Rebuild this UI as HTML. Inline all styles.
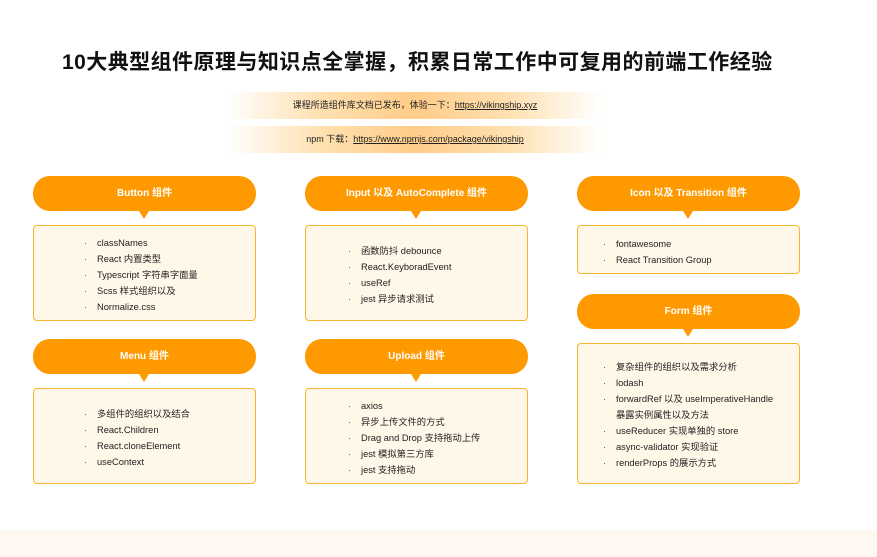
<!DOCTYPE html>
<html><head><meta charset="utf-8"><style>
*{margin:0;padding:0;box-sizing:border-box}
body{width:877px;height:557px;background:#fff;position:relative;overflow:hidden;font-family:"Liberation Sans","Noto Sans CJK SC",sans-serif;color:#222}
.title{position:absolute;left:62px;top:46px;font-size:21px;font-weight:bold;color:#111;white-space:nowrap;letter-spacing:0.45px}
.ban{position:absolute;left:228px;width:374px;height:27px;background:linear-gradient(90deg,rgba(255,200,120,0) 0%,#ffe0b0 25%,#ffcc88 50%,#ffe0b0 75%,rgba(255,200,120,0) 100%);font-size:9px;text-align:center;line-height:27px;color:#222}
.ban u{color:#222}
.hd{position:absolute;width:223px;height:35px;background:#ff9900;border-radius:17px;color:#fff;font-weight:bold;font-size:10px;text-align:center;line-height:35px}
.hd:after{content:"";position:absolute;left:106px;bottom:-8px;border-left:5px solid transparent;border-right:5px solid transparent;border-top:8px solid #ff9900}
.bx{position:absolute;width:223px;background:#fff7e8;border:1px solid #f8b530;border-radius:4px;font-size:9.3px;color:#222}
.bx div{height:16px;line-height:16px;position:relative;white-space:nowrap}
.bx div:before{content:"·";position:absolute;left:-13px;color:#555}
.bx div.nb:before{content:""}
.bot{position:absolute;left:0;top:530px;width:877px;height:27px;background:#fff8f0}
</style></head><body>
<div class="title">10大典型组件原理与知识点全掌握，积累日常工作中可复用的前端工作经验</div>
<div class="ban" style="top:92px">课程所造组件库文档已发布，体验一下：<u>https://vikingship.xyz</u></div>
<div class="ban" style="top:126px">npm 下载：<u>https://www.npmjs.com/package/vikingship</u></div>

<div class="hd" style="left:33px;top:176px">Button 组件</div>
<div class="bx" style="left:33px;top:225px;height:96px;padding:9px 0 0 63px">
<div>classNames</div><div>React 内置类型</div><div>Typescript 字符串字面量</div><div>Scss 样式组织以及</div><div>Normalize.css</div></div>

<div class="hd" style="left:33px;top:339px">Menu 组件</div>
<div class="bx" style="left:33px;top:388px;height:96px;padding:17px 0 0 63px">
<div>多组件的组织以及结合</div><div>React.Children</div><div>React.cloneElement</div><div>useContext</div></div>

<div class="hd" style="left:305px;top:176px">Input 以及 AutoComplete 组件</div>
<div class="bx" style="left:305px;top:225px;height:96px;padding:17px 0 0 55px">
<div>函数防抖 debounce</div><div>React.KeyboradEvent</div><div>useRef</div><div>jest 异步请求测试</div></div>

<div class="hd" style="left:305px;top:339px">Upload 组件</div>
<div class="bx" style="left:305px;top:388px;height:96px;padding:9px 0 0 55px">
<div>axios</div><div>异步上传文件的方式</div><div>Drag and Drop 支持拖动上传</div><div>jest 模拟第三方库</div><div>jest 支持拖动</div></div>

<div class="hd" style="left:577px;top:176px">Icon 以及 Transition 组件</div>
<div class="bx" style="left:577px;top:225px;height:49px;padding:10px 0 0 38px">
<div>fontawesome</div><div>React Transition Group</div></div>

<div class="hd" style="left:577px;top:294px">Form 组件</div>
<div class="bx" style="left:577px;top:343px;height:141px;padding:15px 0 0 38px">
<div>复杂组件的组织以及需求分析</div><div>lodash</div><div>forwardRef 以及 useImperativeHandle</div><div class="nb">暴露实例属性以及方法</div><div>useReducer 实现单独的 store</div><div>async-validator 实现验证</div><div>renderProps 的展示方式</div></div>
<div class="bot"></div>
</body></html>
